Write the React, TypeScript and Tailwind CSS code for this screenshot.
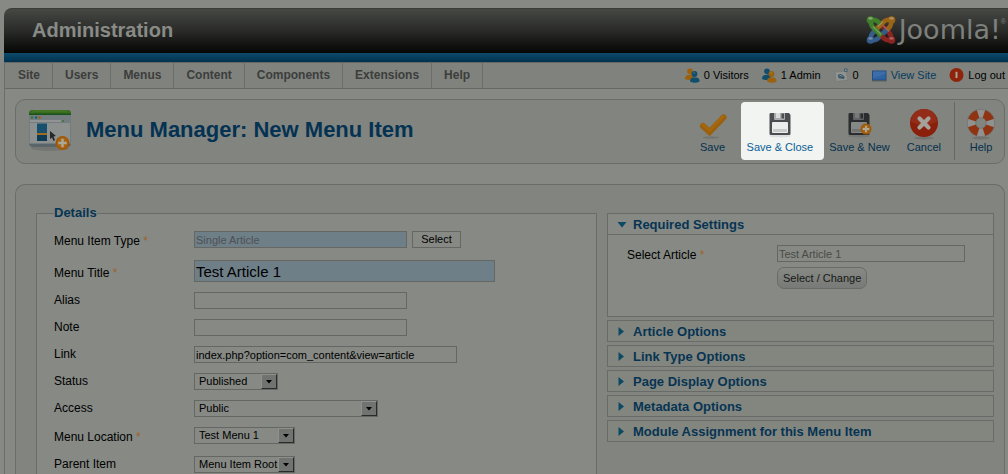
import React from 'react';

const menus = ['Site', 'Users', 'Menus', 'Content', 'Components', 'Extensions', 'Help'];

function JoomlaMark() {
  return (
    <svg viewBox="0 0 30 30" className="h-[30px] w-[30px]" aria-hidden="true" fill="none" strokeLinecap="butt" strokeLinejoin="round">
      <path d="M25 25 Q26 20 22 16.500 L14 8.500" stroke="#8c2422" strokeWidth="4.600" />
      <path d="M5 25 Q4 20 8 16.500 L10 14.500" stroke="#365c8c" strokeWidth="4.600" />
      <path d="M5 25 Q10 26 13.500 22 L21.500 14" stroke="#365c8c" strokeWidth="4.600" />
      <path d="M25 5 Q26 10 22.500 13.500 L21 15" stroke="#9a6416" strokeWidth="4.600" />
      <path d="M25 5 Q20 4 16.500 8 L9.500 15" stroke="#9a6416" strokeWidth="4.600" />
      <path d="M25 25 Q20 26 16.500 22 L15 20.500" stroke="#8c2422" strokeWidth="4.600" />
      <path d="M5 5 Q10 4 13.500 8 L15 9.500" stroke="#40802a" strokeWidth="4.600" />
      <path d="M5 5 Q4 10 8 13.500 L15.500 21" stroke="#40802a" strokeWidth="4.600" />
      <path d="M7 11.500 L15 19.500" stroke="#7d9c66" strokeWidth="1.100" />
      <path d="M12 11.500 L17 6.500" stroke="#b18d58" strokeWidth="1.100" />
      <path d="M17 10.500 L23 16.500" stroke="#a8605d" strokeWidth="1.100" />
      <circle cx="4.500" cy="5" r="3.800" fill="#40802a" />
      <circle cx="25.500" cy="5" r="3.800" fill="#9a6416" />
      <circle cx="4.500" cy="25" r="3.800" fill="#365c8c" />
      <circle cx="25.500" cy="25" r="3.800" fill="#8c2422" />
      <ellipse cx="4.500" cy="3.400" rx="2.200" ry="1.300" fill="#83a36d" />
      <ellipse cx="25.500" cy="3.400" rx="2.200" ry="1.300" fill="#b18d58" />
      <ellipse cx="4.500" cy="23.400" rx="2.200" ry="1.300" fill="#6e88a8" />
      <ellipse cx="25.500" cy="23.400" rx="2.200" ry="1.300" fill="#a8605d" />
    </svg>
  );
}

function People({ back, front }: { back: string; front: string }) {
  return (
    <svg viewBox="0 0 15 15" className="h-[15px] w-[15px]" aria-hidden="true">
      <circle cx="5" cy="3.2" r="2.8" fill={back} />
      <path d="M0 11 Q0 7 3.5 7 L8 6 L9 11 Q4 13 0 11Z" fill={back} />
      <circle cx="9.5" cy="6" r="2.9" fill={front} />
      <path d="M5 13.5 Q5 9.5 8.5 9.5 H11 Q14.6 9.5 14.6 13.5 Q10 16 5 13.5Z" fill={front} />
      <circle cx="9.2" cy="5" r="1" fill="#a5a38a" opacity=".3" />
    </svg>
  );
}

function Mail() {
  return (
    <svg viewBox="0 0 15 15" className="h-[15px] w-[15px]" aria-hidden="true">
      <path d="M1 4 L12 3 L14 12 L2 13.5Z" fill="#90938f" stroke="#747773" strokeWidth=".6" />
      <path d="M4 8 Q6 5 9 8 T7 10 Q4 10 5 8 L10 10" fill="none" stroke="#365568" strokeWidth="1.1" />
      <rect x="10.6" y="1" width="2.4" height="2.4" fill="#90938f" stroke="#365568" strokeWidth=".8" />
    </svg>
  );
}

function Monitor() {
  return (
    <svg viewBox="0 0 15 15" className="h-[15px] w-[15px]" aria-hidden="true">
      <rect x=".5" y="3" width="13.5" height="9" fill="#2f62a0" stroke="#244c80" />
      <path d="M1 3.5 H13.5 V6 L1 10Z" fill="#3c6dab" />
      <path d="M0 12.8 H14.5" stroke="#4d5658" />
    </svg>
  );
}

function Power() {
  return (
    <svg viewBox="0 0 15 15" className="h-[15px] w-[15px]" aria-hidden="true">
      <circle cx="7.5" cy="7" r="7" fill="#8f240a" />
      <path d="M7.5 3.8 V10" stroke="#a9a59f" strokeWidth="2" />
    </svg>
  );
}

function PlusBadge({ x, y, r }: { x: number; y: number; r: number }) {
  return (
    <g>
      <circle cx={x} cy={y} r={r} fill="#a9620f" />
      <circle cx={x} cy={y} r={r - 0.8} fill="none" stroke="#92520b" strokeWidth=".8" />
      <path d={`M${x - r * 0.6} ${y} h${r * 1.2} M${x} ${y - r * 0.6} v${r * 1.2}`} stroke="#aaa99a" strokeWidth={r * 0.36} />
    </g>
  );
}

function MenuManagerIcon() {
  return (
    <svg viewBox="0 0 48 48" className="h-12 w-12" aria-hidden="true">
      <ellipse cx="24" cy="40" rx="19" ry="3" fill="#737672" />
      <rect x="3" y="2" width="42" height="37" rx="4" fill="#596568" />
      <path d="M3 7 V5 Q3 2 7 2 H41 Q45 2 45 5 V7Z" fill="#396d1c" />
      <path d="M6 4.500 L8 3 H41" fill="none" stroke="#4b7c2c" strokeWidth="1" />
      <rect x="3" y="5.500" width="42" height="1.500" fill="#17521f" />
      <rect x="3" y="7" width="42" height="29" fill="#737d80" />
      <rect x="4" y="12" width="31" height="2" fill="#919492" />
      <rect x="4" y="15" width="40" height="20" fill="#8c908e" />
      <circle cx="6" cy="9.500" r="1.300" fill="#397339" />
      <circle cx="10" cy="9.500" r="1.300" fill="#195c7d" />
      <circle cx="13.500" cy="9.500" r="1.300" fill="#a15b18" />
      <circle cx="37" cy="13" r="1" fill="#397339" />
      <rect x="11" y="15.500" width="10" height="9.500" fill="#17506f" />
      <rect x="11" y="25" width="10" height="2" fill="#a16c18" />
      <rect x="11" y="27" width="10" height="6" fill="#0d3b55" />
      <path d="M24 23 V31 L26 29.500 L27.500 33 L29 32 L27.500 28.500 L30 28Z" fill="#262829" />
      <PlusBadge x={36.500} y={35} r={7} />
    </svg>
  );
}

function CheckIcon() {
  return (
    <svg viewBox="0 0 32 32" className="h-8 w-8" aria-hidden="true">
      <ellipse cx="14" cy="29.500" rx="8" ry="1" fill="#70736f" />
      <path d="M6 18 L12.500 24 L26.500 9.500" fill="none" stroke="#9b600e" strokeWidth="6" strokeLinecap="round" />
      <path d="M6 16.500 L12.500 22.500 L26 8.500" fill="none" stroke="#a5680f" strokeWidth="2.500" strokeLinecap="round" />
    </svg>
  );
}

function DiskIcon({ lit = false }: { lit?: boolean }) {
  const paper = lit ? '#eceeed' : '#858886';
  const body = lit ? '#4c4d51' : '#2b2c2e';
  return (
    <svg viewBox="0 0 32 32" className="h-8 w-8" aria-hidden="true">
      <ellipse cx="16" cy="28" rx="11" ry="1.500" fill={lit ? '#dcdfdd' : '#747773'} />
      <path d="M5.500 6 Q5.500 5 7 5 H25 L26.500 7 V26 Q26.500 27 25 27 H7 Q5.500 27 5.500 26Z" fill={body} />
      <path d="M10 5 H21 V11 Q21 12 20 12 H11 Q10 12 10 11Z" fill={lit ? '#a8abac' : '#606364'} />
      <rect x="12" y="5" width="4" height="5" fill={lit ? '#d8dbdb' : '#777a79'} />
      <rect x="17.500" y="5.500" width="2.500" height="5" fill={body} />
      <rect x="8" y="14" width="16" height="11" rx="1" fill={paper} />
      <path d="M9 22.500 H23" stroke={lit ? '#c8cbc9' : '#70736f'} strokeWidth="3" />
      {!lit && <PlusBadge x={23} y={21} r={5.500} />}
    </svg>
  );
}

function CancelIcon() {
  return (
    <svg viewBox="0 0 32 32" className="h-8 w-8" aria-hidden="true">
      <ellipse cx="16" cy="30" rx="10" ry="1.500" fill="#70736f" />
      <circle cx="16" cy="15" r="14" fill="#8a1f0b" />
      <path d="M3 14 A13 13 0 0 1 29 14 Q16 19 3 14" fill="#932d19" />
      <path d="M11.500 10.500 L20.500 19.500 M20.500 10.500 L11.500 19.500" stroke="#a5a19b" strokeWidth="4.200" strokeLinecap="round" />
    </svg>
  );
}

function LifebuoyIcon() {
  return (
    <svg viewBox="0 0 32 32" className="h-8 w-8" aria-hidden="true" fill="none">
      <ellipse cx="16" cy="30" rx="9" ry="1.500" fill="#70736f" />
      <circle cx="16" cy="15" r="9.500" stroke="#8f928f" strokeWidth="8.500" />
      <circle cx="16" cy="15" r="9.500" stroke="#8f3312" strokeWidth="8.500" pathLength="80" strokeDasharray="12 8" strokeDashoffset="-4" />
      <circle cx="16" cy="15" r="13.800" stroke="#696c69" strokeWidth=".6" />
      <circle cx="16" cy="15" r="5.200" stroke="#6f726f" strokeWidth=".8" />
    </svg>
  );
}

function ToolButton({ label, lit = false, children }: { label: string; lit?: boolean; children: React.ReactNode }) {
  return (
    <button
      type="button"
      className={
        'flex h-[58px] flex-col items-center justify-center gap-px rounded text-[11px] leading-[13px] whitespace-nowrap ' +
        (lit ? 'bg-[#f1f4f1] pr-[11px] pl-[6px] text-[#0b5f97]' : 'px-[5px] text-[#06304d]')
      }
    >
      {children}
      <span>{label}</span>
    </button>
  );
}

function Row({ id, label, required = false, children }: { id: string; label: string; required?: boolean; children: React.ReactNode }) {
  return (
    <div className={'flex ' + (required ? 'min-h-[19px]' : 'min-h-[17px]')}>
      <label htmlFor={id} className="w-[140px] shrink-0 self-end text-[12px] leading-[17px]">
        {label}
        {required && <span className="text-[#a0622a]"> *</span>}
      </label>
      <div className="flex items-start gap-[5px]">{children}</div>
    </div>
  );
}

const field = 'h-[17px] border border-[#646763] px-px text-[11px] leading-[15px] ';

function Drop({ id, width, value }: { id: string; width: string; value: string }) {
  return (
    <div className={'relative flex h-[17px] ' + width}>
      <select id={id} defaultValue={value} className={field + 'w-full appearance-none bg-[#868984] pl-1 text-black'}>
        <option>{value}</option>
      </select>
      <span className="pointer-events-none absolute top-px right-px flex h-[15px] w-4 items-center justify-center border border-t-[#8e918d] border-r-[#292a29] border-b-[#292a29] border-l-[#8e918d] bg-[#70736f]">
        <svg viewBox="0 0 6 4" className="h-1 w-[6px]" aria-hidden="true">
          <path d="M0 0 H6 L3 3.500Z" fill="#000" />
        </svg>
      </span>
    </div>
  );
}

function Arrow({ open = false }: { open?: boolean }) {
  return (
    <svg viewBox="0 0 10 10" className="h-[10px] w-[10px]" aria-hidden="true">
      <path d={open ? 'M0.500 2 H9.500 L5 7.500Z' : 'M1.500 0 L7 4.500 L1.500 9Z'} fill="#0c4a64" />
    </svg>
  );
}

function PanelHead({ title, open = false }: { title: string; open?: boolean }) {
  return (
    <h3>
      <button type="button" aria-expanded={open} className="flex h-5 w-full items-center gap-[6px] pt-px pl-[9px] text-left text-[13px] leading-5 font-bold text-[#073453]">
        <Arrow open={open} />
        {title}
      </button>
    </h3>
  );
}

export default function App() {
  return (
    <div className="flex min-h-screen flex-col bg-[#868984] pt-2 pl-1 font-['Liberation_Sans',Arial,sans-serif] text-black">
      <header className="flex h-[45px] items-center justify-between rounded-tl-lg border-t border-[#3a3c39] bg-linear-to-b from-[#464844] via-[#2a2b29] to-[#060705] pr-[2px] pl-7">
        <h1 className="pb-[2px] text-[20px] leading-6 font-bold text-[#888b86]">Administration</h1>
        <div className="flex items-center gap-[3px] pb-[2px] text-[#7d807c]">
          <JoomlaMark />
          <div className="flex">
            <span className="font-['DejaVu_Sans',sans-serif] text-[27px] leading-[30px]">Joomla!</span>
            <span className="text-[7px] leading-[14px]">®</span>
          </div>
        </div>
      </header>
      <div className="h-[9px] bg-linear-to-b from-[#0f4a6b] to-[#01324f]" />

      <div className="flex flex-1 flex-col border-l border-[#6a6d69]">
        <div className="flex h-[27px] items-stretch justify-between border-t border-b border-[#656864] bg-[#7f827d]">
          <nav className="flex pl-px">
            {menus.map((name) => (
              <a key={name} href="#" className="flex items-center border-r border-[#6b6e6a] px-3 pb-px text-[12px] leading-4 font-bold text-[#3c3d3c]">
                {name}
              </a>
            ))}
          </nav>
          <div className="flex items-center gap-[13px] pr-[3px] pb-px text-[11px] leading-[14px] whitespace-nowrap">
            <span className="flex items-center gap-1"><People back="#9b610d" front="#104e6b" />0 Visitors</span>
            <span className="flex items-center gap-1"><People back="#104e6b" front="#9b610d" />1 Admin</span>
            <span className="flex items-center gap-1"><Mail />0</span>
            <a href="#" className="flex items-center gap-1 text-[#083c5f]"><Monitor />View Site</a>
            <a href="#" className="flex items-center gap-1"><Power />Log out</a>
          </div>
        </div>

        <main className="flex flex-1 flex-col gap-5 pt-[10px] pr-[3px] pl-[10px]">
          <section className="flex h-[65px] items-center justify-between rounded-[10px] border border-[#6a6d69] bg-[#81847f] pr-[2px] pl-[10px]">
            <div className="flex items-center gap-3">
              <MenuManagerIcon />
              <h2 className="pb-[3px] text-[22px] leading-7 font-bold text-[#043253]">Menu Manager: New Menu Item</h2>
            </div>
            <div className="flex items-center pb-[2px]">
              <div className="mr-[7px] flex"><ToolButton label="Save"><CheckIcon /></ToolButton></div>
              <ToolButton label="Save & Close" lit><DiskIcon lit /></ToolButton>
              <ToolButton label="Save & New"><DiskIcon /></ToolButton>
              <div className="ml-[7px] flex border-r border-[#656864] pr-2"><ToolButton label="Cancel"><CancelIcon /></ToolButton></div>
              <div className="ml-[5px] flex"><ToolButton label="Help"><LifebuoyIcon /></ToolButton></div>
            </div>
          </section>

          <form className="grid flex-1 grid-cols-[561fr_387fr] gap-[10px] rounded-t-[10px] border border-b-0 border-[#6a6d69] bg-[#81847f] pt-5 pr-[10px] pl-5">
            <fieldset className="min-w-0 border border-b-0 border-[#686b67] bg-[#868984] px-[17px]">
              <legend className="text-[13px] leading-4 font-bold text-[#073453]">Details</legend>
              <div className="flex flex-col gap-[10px] pt-[10px]">
                <Row id="type" label="Menu Item Type" required>
                  <input id="type" readOnly defaultValue="Single Article" className={field + 'w-[213px] bg-[#6f7f88] text-[#4d5153]'} />
                  <button type="button" className="h-[17px] w-[49px] border border-[#646763] text-[11px] leading-[15px]">Select</button>
                </Row>
                <Row id="title" label="Menu Title" required>
                  <input id="title" defaultValue="Test Article 1" className="h-[22px] w-[301px] border border-[#646763] bg-[#6f7f88] px-px text-[15px] leading-5" />
                </Row>
                <Row id="alias" label="Alias"><input id="alias" className={field + 'w-[213px]'} /></Row>
                <Row id="note" label="Note"><input id="note" className={field + 'w-[213px]'} /></Row>
                <Row id="link" label="Link">
                  <input id="link" readOnly defaultValue="index.php?option=com_content&view=article" className={field + 'w-[263px]'} />
                </Row>
                <Row id="status" label="Status"><Drop id="status" width="w-[84px]" value="Published" /></Row>
                <Row id="access" label="Access"><Drop id="access" width="w-[184px]" value="Public" /></Row>
                <Row id="location" label="Menu Location" required><Drop id="location" width="w-[101px]" value="Test Menu 1" /></Row>
                <Row id="parent" label="Parent Item"><Drop id="parent" width="w-[101px]" value="Menu Item Root" /></Row>
              </div>
            </fieldset>

            <div className="flex flex-col gap-[3px] pt-2">
              <section className="h-[104px] border border-[#686b67] bg-[#868984]">
                <div className="border-b border-[#686b67]"><PanelHead title="Required Settings" open /></div>
                <div className="flex pt-[10px] pl-[19px]">
                  <label htmlFor="article" className="w-[150px] pt-[2px] text-[12px] leading-[17px]">
                    Select Article<span className="text-[#a0622a]"> *</span>
                  </label>
                  <div className="flex flex-col items-start gap-[5px]">
                    <input id="article" readOnly defaultValue="Test Article 1" className={field + 'w-[188px] text-[#4a4c49]'} />
                    <button type="button" className="h-[22px] rounded-[7px] border border-[#696c68] bg-linear-to-b from-[#868984] to-[#777a76] px-[5px] text-[11px] leading-5 text-[#171817]">
                      Select / Change
                    </button>
                  </div>
                </div>
              </section>
              {['Article Options', 'Link Type Options', 'Page Display Options', 'Metadata Options', 'Module Assignment for this Menu Item'].map((title) => (
                <section key={title} className="border border-[#686b67] bg-[#83867f]"><PanelHead title={title} /></section>
              ))}
            </div>
          </form>
        </main>
      </div>
    </div>
  );
}
